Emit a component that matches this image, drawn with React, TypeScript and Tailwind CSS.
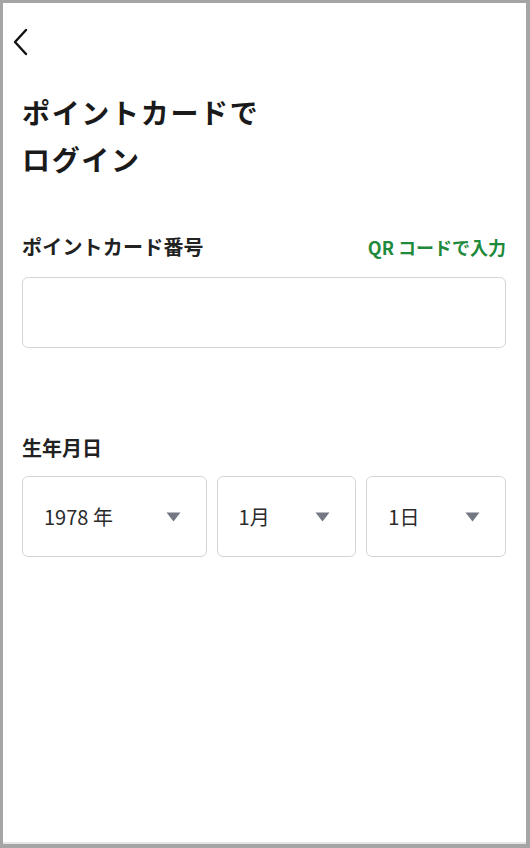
import React from "react";

function Caret() {
  return (
    <svg width="15" height="10" viewBox="0 0 15 10" className="shrink-0">
      <path d="M0.5 0.5 L14.5 0.5 L7.5 9.5 Z" fill="#737882" />
    </svg>
  );
}

function SelectBox({ label, width }: { label: string; width: string }) {
  return (
    <div
      className={`${width} h-[81px] border border-[#d4d4d6] rounded-[6px] flex items-center justify-between pl-[21px] pr-[25px]`}
    >
      <span className="text-[20px] text-[#2b2b2b] leading-none">{label}</span>
      <Caret />
    </div>
  );
}

export default function App() {
  return (
    <div
      className="w-[530px] h-[848px] bg-white border-solid border-[#a5a5a5] border-t-[3px] border-l-[3px] border-r-[4px] border-b-[4px] box-border flex flex-col"
      style={{ fontFamily: '"Noto Sans CJK JP", "Noto Sans", sans-serif' }}
    >
      <div className="flex-1 flex flex-col pl-[19px] pr-[20px]">
        <div className="mt-[25px] -ml-[11px] h-[28px]">
          <svg width="18" height="28" viewBox="0 0 18 28">
            <path
              d="M15 2 L4 14 L15 26"
              fill="none"
              stroke="#111"
              strokeWidth="2.4"
              strokeLinecap="round"
              strokeLinejoin="round"
            />
          </svg>
        </div>
        <h1 className="mt-[33px] text-[28px] leading-[47px] font-bold text-[#1a1a1a] tracking-[0.06em]">
          ポイントカードで
          <br />
          ログイン
        </h1>
        <div className="mt-[50px] h-[28px] flex items-center justify-between">
          <span className="text-[20px] font-bold text-[#222] tracking-[0.01em]">
            ポイントカード番号
          </span>
          <span className="text-[18px] font-bold text-[#1f8a3b]">QR コードで入力</span>
        </div>
        <div className="mt-[16px] h-[71px] border border-[#d4d4d6] rounded-[6px]" />
        <div className="mt-[86px] h-[28px] flex items-center">
          <span className="text-[20px] font-bold text-[#222]">生年月日</span>
        </div>
        <div className="mt-[14px] flex gap-[10px]">
          <SelectBox label="1978 年" width="w-[185px]" />
          <SelectBox label="1月" width="w-[140px]" />
          <SelectBox label="1日" width="w-[140px]" />
        </div>
      </div>
      <div className="h-[2px] bg-[#e6e6e6]" />
    </div>
  );
}
